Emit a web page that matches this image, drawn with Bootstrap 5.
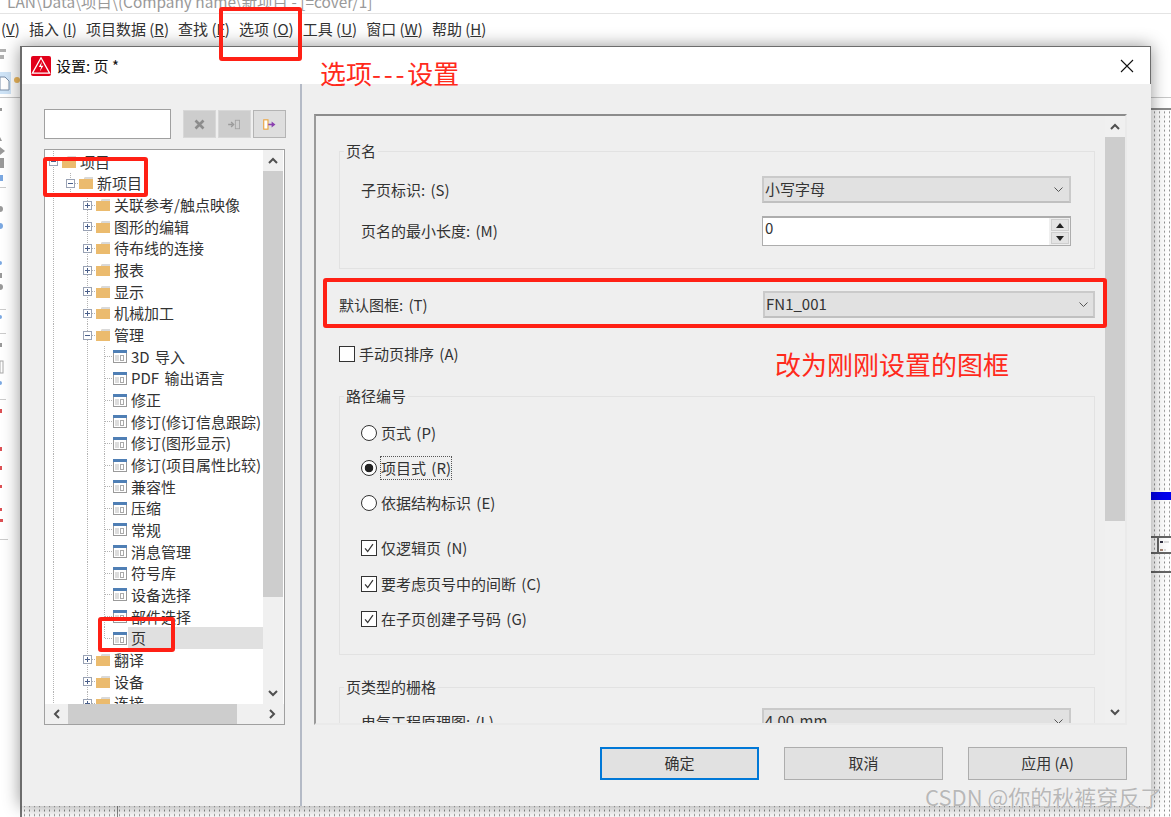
<!DOCTYPE html>
<html lang="zh-CN">
<head>
  <meta charset="UTF-8">
  <meta name="viewport" content="width=device-width, initial-scale=1.0">
  <title>设置: 页</title>
  <link href="https://cdn.jsdelivr.net/npm/bootstrap@5.3.3/dist/css/bootstrap.min.css" rel="stylesheet">
  <style>
    body { margin: 0; background: #fff; color: #333; font: 15px/22px "Noto Sans CJK SC", "Liberation Sans", sans-serif; word-spacing: 2px; }
    .app-win { width: 1171px; height: 817px; overflow: hidden; }

    /* main window chrome */
    .app-title { height: 14px; overflow: hidden; border-bottom: 1px solid #e4e4e4; padding-left: 7px; color: #999; font-size: 15.4px; word-spacing: 0; }
    .app-title span { display: block; margin-top: -10px; }
    .app-menu { height: 27px; padding-left: 1px; gap: 9.1px; line-height: 29px; color: #333; word-spacing: 0; }
    .app-tools { height: 57px; border-bottom: 1px solid #c8c8c8; }
    .app-work { height: 719px; }
    .side-strip { width: 20px; flex: none; }
    .side-strip svg { display: block; }
    .draw-area { position: relative; flex: 1; margin-top: 10px; border-top: 2px solid #8a8a8a; border-left: 2px solid #777;
      background: radial-gradient(circle, #8c8c8c .85px, transparent 1px) 0 0 / 5px 4.6px; }
    .cv-bar { position: absolute; left: 1129px; top: 382px; width: 20px; height: 8px; background: #0000ee; }
    .cv-cell { position: absolute; left: 1129px; top: 426px; width: 20px; height: 18px; border-top: 2px solid #666; border-bottom: 2px solid #666; }
    .cv-cell i { position: absolute; left: 6px; top: -2px; bottom: -2px; border-left: 2px solid #666; }
    .cv-cell b { position: absolute; left: 8px; top: 0; right: 0; bottom: 0; background: #fff; }
    .cv-cell svg { position: absolute; left: 9px; top: 1px; }
    .cv-line { position: absolute; left: 1129px; top: 461px; width: 20px; border-top: 2px solid #666; }
    .cv-col { position: absolute; left: 95px; top: 688px; height: 20px; border-left: 1px solid #888; }

    /* dialog */
    .dlg { position: absolute; left: 20px; top: 46px; width: 1131px; height: 760px; background: #efefef; border-left: 2px solid #6c6c6c;
      box-shadow: 0 0 16px rgba(0, 0, 0, .42); }
    .dlg-head { height: 38px; background: #fff; border-top: 1px solid #6c6c6c; border-right: 1px solid #6c6c6c; padding: 0 16px 0 9px; color: #111; word-spacing: 0; }
    .dlg-head svg.logo { margin-right: 5px; }
    .dlg-close { margin-left: auto; }
    .left-pane { width: 278px; flex: none; padding: 25px 0 0 22px; }
    .splitter { width: 2px; flex: none; background: #b4bac6; }
    .right-pane { flex: 1; padding: 30px 24px 0 12px; }

    .find-box { width: 127px; height: 30px; background: #fff; border: 1px solid #a0a0a0; margin-right: 12px; }
    .tool-btn { width: 33px; height: 28px; margin: 1px 2px 0 0; background: #cdcdcd; border: 1px solid #d8d8d8; }
    .tool-btn.on { background: #dedede; border-color: #b4b4b4; }

    /* tree */
    .tree-box { width: 241px; height: 576px; margin-top: 10px; background: #fff; border: 1px solid #a0a0a0; }
    .tree-rows { width: 218px; height: 554px; padding-top: 1px; overflow: hidden; }
    .tree-row { height: 21.66px; display: flex; align-items: center; white-space: nowrap; color: #333; }
    .tree-row > i { width: 17px; height: 100%; flex: none; display: flex; align-items: center; justify-content: center; }
    .tg { background: repeating-linear-gradient(to bottom, #b4b4b4 0 1px, transparent 1px 2px) center / 1px 100% no-repeat; }
    .te { background: repeating-linear-gradient(to bottom, #b4b4b4 0 1px, transparent 1px 2px) center / 1px 100% no-repeat,
      repeating-linear-gradient(to right, #b4b4b4 0 1px, transparent 1px 2px) right center / 8px 1px no-repeat; }
    .te-end { background: repeating-linear-gradient(to bottom, #b4b4b4 0 1px, transparent 1px 2px) center top / 1px 50% no-repeat,
      repeating-linear-gradient(to right, #b4b4b4 0 1px, transparent 1px 2px) right center / 8px 1px no-repeat; }
    .ic-f { width: 14px; height: 12px; flex: none; margin-right: 4px; }
    .ic-p { width: 14px; height: 13px; flex: none; margin-right: 4px; }
    .row-sel { flex: 1; margin-left: -3px; padding-left: 3px; background: #e0e0e0; height: 100%; }
    .vs-bar { width: 20px; height: 554px; flex: none; background: #f0f0f0; }
    .vs-arrow { height: 21px; flex: none; }
    .vs-thumb { background: #cdcdcd; }
    .hs-bar { height: 20px; background: #f0f0f0; }
    .hs-arrow { width: 23px; flex: none; }
    .hs-thumb { width: 169px; background: #cdcdcd; }

    /* settings page */
    .page-frame { height: 611px; border: 2px solid #eaeaea; border-top-color: #8c8c8c; border-left-color: #9a9a9a; overflow: hidden; }
    .page-body { flex: 1; min-width: 0; padding: 24px 10px 0 23px; overflow: hidden; }
    .grp { border: 1px solid #e2e2e2; padding: 0 23px 0 21px; min-width: 0; }
    .grp legend { float: none; width: auto; padding: 0 2px; font-size: 15px; line-height: 22px; margin: 0 0 0 -17px; }
    .drop { width: 309px; height: 27px; background: #e1e1e1; border: 2px solid #cacaca; border-bottom-color: #c0c0c0; padding: 0 6px 2px 1px; line-height: 23px; }
    .drop svg { margin-top: 2px; }
    .drop.wide { width: 332px; padding-right: 5px; }
    .spin-box { width: 309px; height: 30px; background: #fff; border: 1px solid #adadad; border-top-width: 2px; }
    .spin-box span { flex: 1; padding-left: 2px; line-height: 20px; }
    .spin-btns { width: 21px; flex: none; background: #efefef; padding: 1px 1px 1px 2px; gap: 1px; }
    .spin-btns div { flex: 1; background: #e4e4e4; border: 1px solid #cfcfcf; }
    .opt-line { height: 22px; }
    .form-check-input { width: 16px; height: 16px; margin: 0 4px 0 0; flex: none; background-color: #fff; border: 1px solid #333; }
    .form-check-input[type=checkbox] { border-radius: 0; }
    .form-check-input[type=radio] { border-radius: 50%; }
    .form-check-input:checked { background-color: #fff; border-color: #333; }
    .form-check-input:checked[type=radio] { background-image: radial-gradient(circle, #222 0 4px, transparent 4.6px); }
    .form-check-input:checked[type=checkbox] { background-image: url("data:image/svg+xml,%3Csvg xmlns='http://www.w3.org/2000/svg' viewBox='0 0 16 16'%3E%3Cpath d='M3.5 8.5 6.5 12 12.5 3.5' fill='none' stroke='%23333' stroke-width='1.4'/%3E%3C/svg%3E"); }
    .form-check-input:focus { box-shadow: none; }
    .focus-txt { outline: 1px dotted #555; outline-offset: 0; }
    .dlg-btn { width: 159px; height: 33px; padding: 0; background: #e1e1e1; border: 1px solid #adadad; border-radius: 0; color: #333; font-size: 15px; }
    .dlg-btn.is-def { border: 2px solid #0078d7; }
    .dlg-btn:hover { background: #e1e1e1; color: #333; }

    /* annotations drawn over the screenshot */
    .note-box { position: absolute; border: 4px solid #ff2015; border-radius: 3px; }
    .note-text { position: absolute; color: #ff2a1c; font-size: 26px; line-height: 32px; white-space: nowrap; word-spacing: 0; }
    .note-dash { letter-spacing: 2.7px; }
    .wm { position: absolute; left: 925px; top: 782px; color: #b8b8b8; font-size: 22px; line-height: 28px; white-space: nowrap; text-shadow: 0 0 1px #fff; word-spacing: 0; }
  </style>
</head>
<body>
  <svg width="0" height="0" class="position-absolute">
    <symbol id="i-folder" viewBox="0 0 14 12"><path d="M0 2h5l1-2h8v12H0z" fill="#ebbb6e"/><path d="M0 2h5l1-2h8v2z" fill="#d9d9d9"/></symbol>
    <symbol id="i-page" viewBox="0 0 14 13"><rect x=".5" y=".5" width="13" height="12" fill="#fff" stroke="#9a9a9a"/><rect width="14" height="3" fill="#4f7fb5"/><path d="M3 5v6M5 5v6" stroke="#bbb"/><rect x="7.5" y="5.5" width="3" height="5" fill="none" stroke="#aaa"/></symbol>
    <symbol id="i-plus" viewBox="0 0 9 9"><rect x=".5" y=".5" width="8" height="8" fill="#fff" stroke="#9aa3b5"/><path d="M2 4.5h5M4.5 2v5" stroke="#4a5f8a"/></symbol>
    <symbol id="i-minus" viewBox="0 0 9 9"><rect x=".5" y=".5" width="8" height="8" fill="#fff" stroke="#9aa3b5"/><path d="M2 4.5h5" stroke="#4a5f8a"/></symbol>
  </svg>

  <div class="app-win position-relative">
    <div class="app-title"><span>LAN\Data\项目\(Company name\新项目 - [=cover/1]</span></div>
    <div class="app-menu d-flex">
      <span>(<u>V</u>)</span>
      <span>插入 (<u>I</u>)</span>
      <span>项目数据 (<u>R</u>)</span>
      <span>查找 (<u>F</u>)</span>
      <span>选项 (<u>O</u>)</span>
      <span>工具 (<u>U</u>)</span>
      <span>窗口 (<u>W</u>)</span>
      <span>帮助 (<u>H</u>)</span>
    </div>
    <div class="app-tools"></div>
    <div class="app-work d-flex">
      <div class="side-strip">
        <!-- left toolbar, only its last pixels stick out from behind the dialog -->
        <svg width="20" height="500" viewBox="0 0 20 500" style="margin-top:-57px">
          <path d="M0 8h6v3H0zM0 14h4v4H0z" fill="#b0b0b0"/>
          <rect x="0" y="31" width="11" height="22" fill="#cfe4f7"/>
          <path d="M0 36h5l4 4v9H0z" fill="#fff" stroke="#7a8ea8"/>
          <circle cx="17" cy="39" r="3" fill="#eeb95e"/>
          <g fill="#777" opacity=".75">
            <rect y="67" width="2" height="3"/><path d="M0 96l2 4H0z"/><path d="M0 106l5 4-5 4z"/><rect y="117" width="4" height="10"/>
            <circle cx="0" cy="168" r="3"/><circle cx="0" cy="246" r="3"/>
            <rect y="232" width="2" height="5"/><rect y="302" width="2" height="4"/>
          </g>
          <rect y="146" width="6" height="1" fill="#ccc"/>
          <g fill="#5b93da" opacity=".8">
            <rect y="134" width="3" height="6"/><circle cx="0" cy="185" r="3"/><circle cx="0" cy="222" r="2"/><circle cx="0" cy="276" r="2"/>
            <circle cx="0" cy="342" r="2"/>
          </g>
          <rect y="268" width="6" height="1" fill="#ccc"/><rect y="292" width="6" height="1" fill="#ccc"/>
          <rect y="320" width="3" height="12" fill="#fff" stroke="#a8a8a8"/>
          <rect y="358" width="6" height="1" fill="#ccc"/>
          <g fill="#d4252a" opacity=".8">
            <rect y="368" width="2" height="4"/><rect y="406" width="2" height="4"/><rect y="425" width="2" height="4"/>
            <rect y="444" width="2" height="3"/><rect y="467" width="2" height="3"/><rect y="478" width="3" height="3"/>
          </g>
          <rect y="498" width="8" height="1" fill="#ccc"/>
        </svg>
      </div>
      <div class="draw-area">
        <div class="cv-bar"></div>
        <div class="cv-cell"><i></i><b></b>
          <svg width="10" height="14" viewBox="0 0 10 14"><rect width="3" height="2" y="2" fill="#334"/><rect x="4" y="2" width="5" height="2" fill="#ddd"/><rect width="3" height="2" y="10" fill="#a87"/><rect x="4" y="10" width="2" height="2" fill="#ddd"/></svg>
        </div>
        <div class="cv-line"></div>
        <div class="cv-col"></div>
      </div>
    </div>

    <div class="dlg d-flex flex-column">
      <div class="dlg-head d-flex align-items-center">
        <svg class="logo" width="20" height="20" viewBox="0 0 20 20">
          <rect width="20" height="20" rx="2" fill="#e2001a"/>
          <path d="M10 1.8 18.6 17.2H1.4z" fill="none" stroke="#fff" stroke-width="1.3"/>
          <path d="M11 5.5 7.8 11h2.4L8.8 15.5l3.6-5.8H10z" fill="#fff"/>
        </svg>
        <span>设置: 页 *</span>
        <svg class="dlg-close" width="14" height="14" viewBox="0 0 14 14"><path d="M1 1l12 12M13 1 1 13" stroke="#111" stroke-width="1.1" fill="none"/></svg>
      </div>
      <div class="d-flex flex-grow-1">
        <div class="left-pane">
          <div class="d-flex">
            <div class="find-box"></div>
            <div class="tool-btn d-flex align-items-center justify-content-center">
              <svg width="11" height="11" viewBox="0 0 11 11"><path d="M1.5 1.5l8 8M9.5 1.5l-8 8" stroke="#8c8c8c" stroke-width="2.6"/></svg>
            </div>
            <div class="tool-btn d-flex align-items-center justify-content-center">
              <svg width="13" height="11" viewBox="0 0 15 13"><rect x="8.5" y="1.5" width="5" height="10" fill="none" stroke="#a2a2a2"/><path d="M0 6.5h5M3.5 3.5l3 3-3 3" stroke="#9a9a9a" stroke-width="1.5" fill="none"/></svg>
            </div>
            <div class="tool-btn on d-flex align-items-center justify-content-center">
              <svg width="13" height="11" viewBox="0 0 15 13"><rect x=".7" y="1" width="5" height="11" fill="#fff" stroke="#eba23c" stroke-width="1.3"/><path d="M6 6.5h5" stroke="#8a3fb0" stroke-width="1.8"/><path d="M10 3l4.5 3.5L10 10z" fill="#8a3fb0"/></svg>
            </div>
          </div>
          <div class="tree-box">
            <div class="d-flex">
              <div class="tree-rows">
                <div class="tree-row"><i class="tg"><svg width="9" height="9"><use href="#i-minus"/></svg></i><svg class="ic-f"><use href="#i-folder"/></svg><span>项目</span></div>
                <div class="tree-row"><i class="tg"></i><i class="te"><svg width="9" height="9"><use href="#i-minus"/></svg></i><svg class="ic-f"><use href="#i-folder"/></svg><span>新项目</span></div>
                <div class="tree-row"><i class="tg"></i><i></i><i class="te"><svg width="9" height="9"><use href="#i-plus"/></svg></i><svg class="ic-f"><use href="#i-folder"/></svg><span>关联参考/触点映像</span></div>
                <div class="tree-row"><i class="tg"></i><i></i><i class="te"><svg width="9" height="9"><use href="#i-plus"/></svg></i><svg class="ic-f"><use href="#i-folder"/></svg><span>图形的编辑</span></div>
                <div class="tree-row"><i class="tg"></i><i></i><i class="te"><svg width="9" height="9"><use href="#i-plus"/></svg></i><svg class="ic-f"><use href="#i-folder"/></svg><span>待布线的连接</span></div>
                <div class="tree-row"><i class="tg"></i><i></i><i class="te"><svg width="9" height="9"><use href="#i-plus"/></svg></i><svg class="ic-f"><use href="#i-folder"/></svg><span>报表</span></div>
                <div class="tree-row"><i class="tg"></i><i></i><i class="te"><svg width="9" height="9"><use href="#i-plus"/></svg></i><svg class="ic-f"><use href="#i-folder"/></svg><span>显示</span></div>
                <div class="tree-row"><i class="tg"></i><i></i><i class="te"><svg width="9" height="9"><use href="#i-plus"/></svg></i><svg class="ic-f"><use href="#i-folder"/></svg><span>机械加工</span></div>
                <div class="tree-row"><i class="tg"></i><i></i><i class="te"><svg width="9" height="9"><use href="#i-minus"/></svg></i><svg class="ic-f"><use href="#i-folder"/></svg><span>管理</span></div>
                <div class="tree-row"><i class="tg"></i><i></i><i class="tg"></i><i class="te"></i><svg class="ic-p"><use href="#i-page"/></svg><span>3D 导入</span></div>
                <div class="tree-row"><i class="tg"></i><i></i><i class="tg"></i><i class="te"></i><svg class="ic-p"><use href="#i-page"/></svg><span>PDF 输出语言</span></div>
                <div class="tree-row"><i class="tg"></i><i></i><i class="tg"></i><i class="te"></i><svg class="ic-p"><use href="#i-page"/></svg><span>修正</span></div>
                <div class="tree-row"><i class="tg"></i><i></i><i class="tg"></i><i class="te"></i><svg class="ic-p"><use href="#i-page"/></svg><span>修订(修订信息跟踪)</span></div>
                <div class="tree-row"><i class="tg"></i><i></i><i class="tg"></i><i class="te"></i><svg class="ic-p"><use href="#i-page"/></svg><span>修订(图形显示)</span></div>
                <div class="tree-row"><i class="tg"></i><i></i><i class="tg"></i><i class="te"></i><svg class="ic-p"><use href="#i-page"/></svg><span>修订(项目属性比较)</span></div>
                <div class="tree-row"><i class="tg"></i><i></i><i class="tg"></i><i class="te"></i><svg class="ic-p"><use href="#i-page"/></svg><span>兼容性</span></div>
                <div class="tree-row"><i class="tg"></i><i></i><i class="tg"></i><i class="te"></i><svg class="ic-p"><use href="#i-page"/></svg><span>压缩</span></div>
                <div class="tree-row"><i class="tg"></i><i></i><i class="tg"></i><i class="te"></i><svg class="ic-p"><use href="#i-page"/></svg><span>常规</span></div>
                <div class="tree-row"><i class="tg"></i><i></i><i class="tg"></i><i class="te"></i><svg class="ic-p"><use href="#i-page"/></svg><span>消息管理</span></div>
                <div class="tree-row"><i class="tg"></i><i></i><i class="tg"></i><i class="te"></i><svg class="ic-p"><use href="#i-page"/></svg><span>符号库</span></div>
                <div class="tree-row"><i class="tg"></i><i></i><i class="tg"></i><i class="te"></i><svg class="ic-p"><use href="#i-page"/></svg><span>设备选择</span></div>
                <div class="tree-row"><i class="tg"></i><i></i><i class="tg"></i><i class="te"></i><svg class="ic-p"><use href="#i-page"/></svg><span>部件选择</span></div>
                <div class="tree-row"><i class="tg"></i><i></i><i class="tg"></i><i class="te-end"></i><svg class="ic-p"><use href="#i-page"/></svg><span class="row-sel">页</span></div>
                <div class="tree-row"><i class="tg"></i><i></i><i class="te"><svg width="9" height="9"><use href="#i-plus"/></svg></i><svg class="ic-f"><use href="#i-folder"/></svg><span>翻译</span></div>
                <div class="tree-row"><i class="tg"></i><i></i><i class="te"><svg width="9" height="9"><use href="#i-plus"/></svg></i><svg class="ic-f"><use href="#i-folder"/></svg><span>设备</span></div>
                <div class="tree-row"><i class="tg"></i><i></i><i class="te"><svg width="9" height="9"><use href="#i-plus"/></svg></i><svg class="ic-f"><use href="#i-folder"/></svg><span>连接</span></div>
              </div>
              <div class="vs-bar d-flex flex-column">
                <div class="vs-arrow d-flex align-items-center justify-content-center"><svg width="10" height="7" viewBox="0 0 10 7"><path d="M1 6l4-4 4 4" fill="none" stroke="#505050" stroke-width="2"/></svg></div>
                <div class="vs-thumb" style="height:426px"></div>
                <div class="flex-grow-1"></div>
                <div class="vs-arrow d-flex align-items-center justify-content-center"><svg width="10" height="7" viewBox="0 0 10 7"><path d="M1 1l4 4 4-4" fill="none" stroke="#505050" stroke-width="2"/></svg></div>
              </div>
            </div>
            <div class="hs-bar d-flex">
              <div class="hs-arrow d-flex align-items-center justify-content-center"><svg width="7" height="10" viewBox="0 0 7 10"><path d="M6 1 2 5l4 4" fill="none" stroke="#505050" stroke-width="2"/></svg></div>
              <div class="hs-thumb"></div>
              <div class="flex-grow-1"></div>
              <div class="hs-arrow d-flex align-items-center justify-content-center"><svg width="7" height="10" viewBox="0 0 7 10"><path d="M1 1l4 4-4 4" fill="none" stroke="#505050" stroke-width="2"/></svg></div>
            </div>
          </div>
        </div>
        <div class="splitter"></div>
        <div class="right-pane">
          <div class="page-frame d-flex">
            <div class="page-body">
              <fieldset class="grp">
                <legend>页名</legend>
                <div class="d-flex align-items-center justify-content-between" style="margin-top:14px">
                  <span>子页标识: (S)</span>
                  <div class="drop d-flex align-items-center justify-content-between"><span>小写字母</span>
                    <svg width="9" height="6" viewBox="0 0 9 6"><path d="M.5.5l4 4 4-4" fill="none" stroke="#555"/></svg></div>
                </div>
                <div class="d-flex align-items-center justify-content-between" style="margin:13px 0 22px">
                  <span>页名的最小长度: (M)</span>
                  <div class="spin-box d-flex"><span>0</span>
                    <div class="spin-btns d-flex flex-column">
                      <div class="d-flex align-items-center justify-content-center"><svg width="8" height="5" viewBox="0 0 8 5"><path d="M4 0l4 5H0z" fill="#222"/></svg></div>
                      <div class="d-flex align-items-center justify-content-center"><svg width="8" height="5" viewBox="0 0 8 5"><path d="M0 0h8L4 5z" fill="#222"/></svg></div>
                    </div>
                  </div>
                </div>
              </fieldset>
              <div class="d-flex align-items-center justify-content-between" style="margin-top:22px">
                <span>默认图框: (T)</span>
                <div class="drop wide d-flex align-items-center justify-content-between"><span>FN1_001</span>
                  <svg width="9" height="6" viewBox="0 0 9 6"><path d="M.5.5l4 4 4-4" fill="none" stroke="#555"/></svg></div>
              </div>
              <div class="opt-line d-flex align-items-center" style="margin-top:25px">
                <input class="form-check-input" type="checkbox"><span>手动页排序 (A)</span>
              </div>
              <fieldset class="grp" style="margin-top:20px">
                <legend>路径编号</legend>
                <div class="opt-line d-flex align-items-center" style="margin-top:15px">
                  <input class="form-check-input" type="radio" name="pathNo"><span>页式 (P)</span>
                </div>
                <div class="opt-line d-flex align-items-center" style="margin-top:13px">
                  <input class="form-check-input" type="radio" name="pathNo" checked><span class="focus-txt">项目式 (R)</span>
                </div>
                <div class="opt-line d-flex align-items-center" style="margin-top:13px">
                  <input class="form-check-input" type="radio" name="pathNo"><span>依据结构标识 (E)</span>
                </div>
                <div class="opt-line d-flex align-items-center" style="margin-top:23px">
                  <input class="form-check-input" type="checkbox" checked><span>仅逻辑页 (N)</span>
                </div>
                <div class="opt-line d-flex align-items-center" style="margin-top:14px">
                  <input class="form-check-input" type="checkbox" checked><span>要考虑页号中的间断 (C)</span>
                </div>
                <div class="opt-line d-flex align-items-center" style="margin:13px 0 24px">
                  <input class="form-check-input" type="checkbox" checked><span>在子页创建子号码 (G)</span>
                </div>
              </fieldset>
              <fieldset class="grp" style="margin-top:21px">
                <legend>页类型的栅格</legend>
                <div class="d-flex align-items-center justify-content-between" style="margin-top:10px">
                  <span>电气工程原理图: (L)</span>
                  <div class="drop d-flex align-items-center justify-content-between"><span>4.00 mm</span>
                    <svg width="9" height="6" viewBox="0 0 9 6"><path d="M.5.5l4 4 4-4" fill="none" stroke="#555"/></svg></div>
                </div>
              </fieldset>
            </div>
            <div class="vs-bar d-flex flex-column" style="height:auto">
              <div class="vs-arrow d-flex align-items-center justify-content-center"><svg width="10" height="7" viewBox="0 0 10 7"><path d="M1 6l4-4 4 4" fill="none" stroke="#505050" stroke-width="2"/></svg></div>
              <div class="vs-thumb" style="height:384px"></div>
              <div class="flex-grow-1"></div>
              <div class="vs-arrow d-flex align-items-center justify-content-center"><svg width="10" height="7" viewBox="0 0 10 7"><path d="M1 1l4 4 4-4" fill="none" stroke="#505050" stroke-width="2"/></svg></div>
            </div>
          </div>
          <div class="d-flex justify-content-end" style="gap:25px;margin-top:22px">
            <button type="button" class="btn dlg-btn is-def">确定</button>
            <button type="button" class="btn dlg-btn">取消</button>
            <button type="button" class="btn dlg-btn">应用 (A)</button>
          </div>
        </div>
      </div>
    </div>

    <div class="note-box" style="left:219px;top:7px;width:83px;height:54px"></div>
    <div class="note-box" style="left:43px;top:157px;width:105px;height:40px"></div>
    <div class="note-box" style="left:98px;top:617px;width:77px;height:35px"></div>
    <div class="note-box" style="left:323px;top:278px;width:784px;height:50px"></div>
    <div class="note-text" style="left:320px;top:57px">选项<span class="note-dash">---</span>设置</div>
    <div class="note-text" style="left:775px;top:348px">改为刚刚设置的图框</div>
    <div class="wm">CSDN @你的秋裤穿反了</div>
  </div>
  <script src="https://cdn.jsdelivr.net/npm/bootstrap@5.3.3/dist/js/bootstrap.bundle.min.js"></script>
</body>
</html>
